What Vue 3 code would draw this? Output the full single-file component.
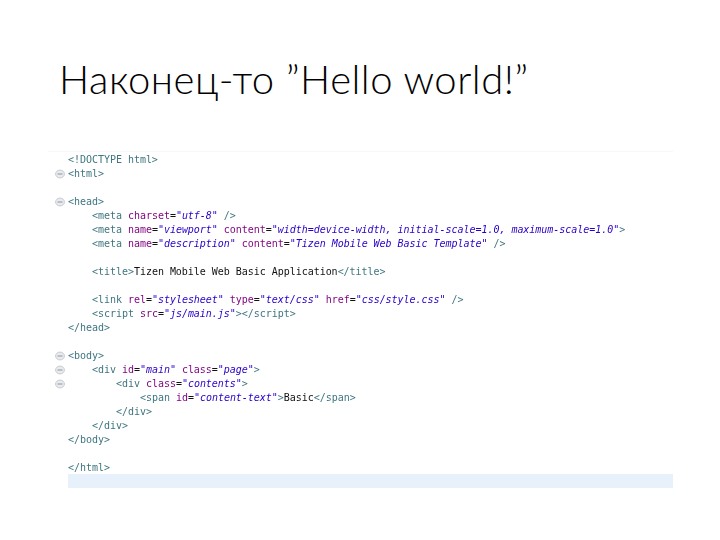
<script setup>
const T = 'tag', A = 'attr', V = 'val', X = 'txt'
const lines = [
  { i: 0, p: [[T, '<!DOCTYPE html>']] },
  { i: 0, fold: true, p: [[T, '<html>']] },
  { i: 0, p: [] },
  { i: 0, fold: true, p: [[T, '<head>']] },
  { i: 1, p: [[T, '<meta '], [A, 'charset'], [X, '='], [V, '"utf-8"'], [T, ' />']] },
  { i: 1, p: [[T, '<meta '], [A, 'name'], [X, '='], [V, '"viewport"'], [T, ' '], [A, 'content'], [X, '='], [V, '"width=device-width, initial-scale=1.0, maximum-scale=1.0"'], [T, '>']] },
  { i: 1, p: [[T, '<meta '], [A, 'name'], [X, '='], [V, '"description"'], [T, ' '], [A, 'content'], [X, '='], [V, '"Tizen Mobile Web Basic Template"'], [T, ' />']] },
  { i: 0, p: [] },
  { i: 1, p: [[T, '<title>'], [X, 'Tizen Mobile Web Basic Application'], [T, '</title>']] },
  { i: 0, p: [] },
  { i: 1, p: [[T, '<link '], [A, 'rel'], [X, '='], [V, '"stylesheet"'], [T, ' '], [A, 'type'], [X, '='], [V, '"text/css"'], [T, ' '], [A, 'href'], [X, '='], [V, '"css/style.css"'], [T, ' />']] },
  { i: 1, p: [[T, '<script '], [A, 'src'], [X, '='], [V, '"js/main.js"'], [T, '></' + 'script>']] },
  { i: 0, p: [[T, '</head>']] },
  { i: 0, p: [] },
  { i: 0, fold: true, p: [[T, '<body>']] },
  { i: 1, fold: true, p: [[T, '<div '], [A, 'id'], [X, '='], [V, '"main"'], [T, ' '], [A, 'class'], [X, '='], [V, '"page"'], [T, '>']] },
  { i: 2, fold: true, p: [[T, '<div '], [A, 'class'], [X, '='], [V, '"contents"'], [T, '>']] },
  { i: 3, p: [[T, '<span '], [A, 'id'], [X, '='], [V, '"content-text"'], [T, '>'], [X, 'Basic'], [T, '</span>']] },
  { i: 2, p: [[T, '</div>']] },
  { i: 1, p: [[T, '</div>']] },
  { i: 0, p: [[T, '</body>']] },
  { i: 0, p: [] },
  { i: 0, p: [[T, '</html>']] },
  { i: 0, p: [], current: true },
]
</script>

<template>
  <main class="slide">
    <h1 class="title">Наконец-то ”Hello world!”</h1>
    <section class="editor">
      <div v-for="(line, n) in lines" :key="n" class="line">
        <div class="gutter">
          <svg v-if="line.fold" class="fold" viewBox="0 0 10 10" width="10" height="10" aria-hidden="true">
            <ellipse cx="5" cy="5" rx="4.4" ry="3.9" fill="#e9ebee" stroke="#c6cbd0" stroke-width="1" />
            <path d="M2.5 5H7.5" stroke="#8f969d" stroke-width="1" />
          </svg>
        </div>
        <div class="code" :class="{ current: line.current }">
          <span v-for="k in line.i" :key="k" class="indent"></span>
          <span v-for="(part, m) in line.p" :key="m" :class="part[0]">{{ part[1] }}</span>
        </div>
      </div>
    </section>
  </main>
</template>

<style>
html, body { background: #fff; }
</style>

<style scoped>
.slide {
  width: 720px;
  height: 540px;
  box-sizing: border-box;
  padding: 54px 47px 0 48px;
  background: #fff;
  overflow: hidden;
}
.title {
  margin: 0 0 0 11px;
  height: 97px;
  font: 300 40px/50px Lato, "Open Sans", sans-serif;
  letter-spacing: 0.5px;
  color: #000;
  white-space: nowrap;
}
.editor {
  display: flex;
  flex-direction: column;
  background: #fff;
  border-top: 1px solid #f8f8f8;
  padding-top: 1px;
  filter: blur(0.45px);
}
.line {
  display: flex;
  height: 14px;
}
.gutter {
  width: 20px;
  flex: none;
  display: flex;
  align-items: center;
  padding-left: 7px;
  box-sizing: border-box;
}
.code {
  flex: 1;
  display: flex;
  font: 10px/14px "DejaVu Sans Mono", monospace;
  letter-spacing: -0.03px;
  white-space: pre;
}
.current { background: #e6f1fc; height: 14px; align-self: flex-start; margin-top: -1px; }
.indent { width: 24px; flex: none; }
.tag { color: #3f7680; }
.attr { color: #7f007f; }
.val { color: #2a00c8; font-style: italic; }
.txt { color: #111; }
</style>
